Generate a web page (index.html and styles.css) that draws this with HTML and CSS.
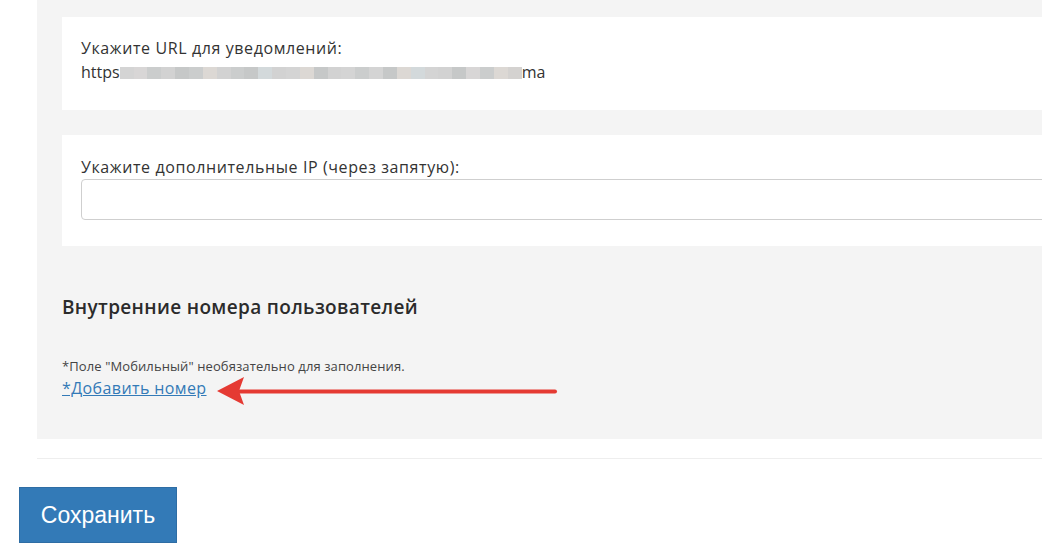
FILE: index.html
```html
<!DOCTYPE html>
<html lang="ru">

<head>
    <meta charset="utf-8">
    <title>Настройки</title>
    <link rel="stylesheet" href="styles.css">
</head>

<body>
    <div class="page">
        <div class="settings">
            <div class="card">
                <div class="label">Укажите URL для уведомлений:</div>
                <div class="url">https<span class="blur"><i></i><i></i><i></i><i></i><i></i><i></i><i></i><i></i><i></i><i></i><i></i><i></i><i></i><i></i><i></i><i></i><i></i><i></i><i></i><i></i><i></i><i></i><i></i><i></i><i></i><i></i><i></i><i></i><i></i></span>ma</div>
            </div>

            <div class="card card-ip">
                <div class="label">Укажите дополнительные IP (через запятую):</div>
                <input type="text" class="field">
            </div>

            <h3 class="section-title">Внутренние номера пользователей</h3>
            <p class="note">*Поле "Мобильный" необязательно для заполнения.</p>
            <a href="#" class="add-link">*Добавить номер</a>
        </div>

        <hr class="sep">

        <button class="btn-save">Сохранить</button>
    </div>

    <!-- annotation arrow drawn over the page -->
    <svg class="arrow" width="1042" height="558" viewBox="0 0 1042 558">
        <line x1="555" y1="391.5" x2="238" y2="391.5" stroke="#e53a33" stroke-width="4" stroke-linecap="round"/>
        <polygon points="217,391 244,377 239,391 244,405" fill="#e53a33"/>
    </svg>
</body>

</html>
```

FILE: styles.css
```css
html, body {
    margin: 0;
    padding: 0;
    background: #fff;
    overflow: hidden;
}

body {
    font-family: "Open Sans", "Noto Sans", sans-serif;
    color: #333;
    width: 1042px;
    height: 558px;
    position: relative;
}

.page {
    width: 1100px;
}

.settings {
    margin-left: 37px;
    background: #f4f4f4;
    padding: 17px 0 40px 25px;
}

.card {
    background: #fff;
    padding: 19px 19px 26px 19px;
}

.card-ip {
    margin-top: 25px;
    padding-top: 20px;
}

.label {
    font-size: 16px;
    line-height: 24px;
    letter-spacing: 0.6px;
    font-weight: 400;
    color: #333;
}

.url {
    font-size: 16px;
    line-height: 24px;
    display: flex;
    align-items: center;
}

.blur {
    display: inline-flex;
    width: 402px;
    height: 12px;
    margin-top: 2px;
}

.blur i {
    flex: 1;
    background: #d4d4d4;
}

.blur i:nth-child(2n) { background: #d8d6d6; }
.blur i:nth-child(3n) { background: #cbcdcd; }
.blur i:nth-child(4n) { background: #d2d2d2; }
.blur i:nth-child(5n) { background: #c6c8c8; }
.blur i:nth-child(7n) { background: #dcd8d4; }
.blur i:nth-child(11n) { background: #d3d9db; }
.blur i:last-child { background: #d4d2d0; }

.field {
    display: block;
    box-sizing: border-box;
    width: 100%;
    height: 41px;
    border: 1px solid #cfcfcf;
    border-radius: 4px;
    background: #fff;
}

.section-title {
    margin: 49px 0 0 0;
    font-size: 19px;
    line-height: 24px;
    letter-spacing: 0.35px;
    font-weight: 600;
    color: #2b2b2b;
}

.note {
    margin: 39px 0 0 0;
    font-size: 13px;
    line-height: 16px;
    letter-spacing: 0.1px;
    color: #444;
}

.add-link {
    display: inline-block;
    margin-top: 4px;
    font-size: 16px;
    line-height: 20px;
    letter-spacing: 0.4px;
    color: #337ab7;
    text-decoration: underline;
}

.sep {
    margin: 19px 0 0 37px;
    border: 0;
    border-top: 1px solid #eeeeee;
    height: 0;
}

.btn-save {
    display: block;
    margin: 28px 0 0 19px;
    width: 158px;
    height: 56px;
    background: #337ab7;
    border: 1px solid #2e6da4;
    color: #fff;
    font-family: "Liberation Sans", Arial, sans-serif;
    font-size: 23px;
}

.arrow {
    position: absolute;
    left: 0;
    top: 0;
    pointer-events: none;
}
```
